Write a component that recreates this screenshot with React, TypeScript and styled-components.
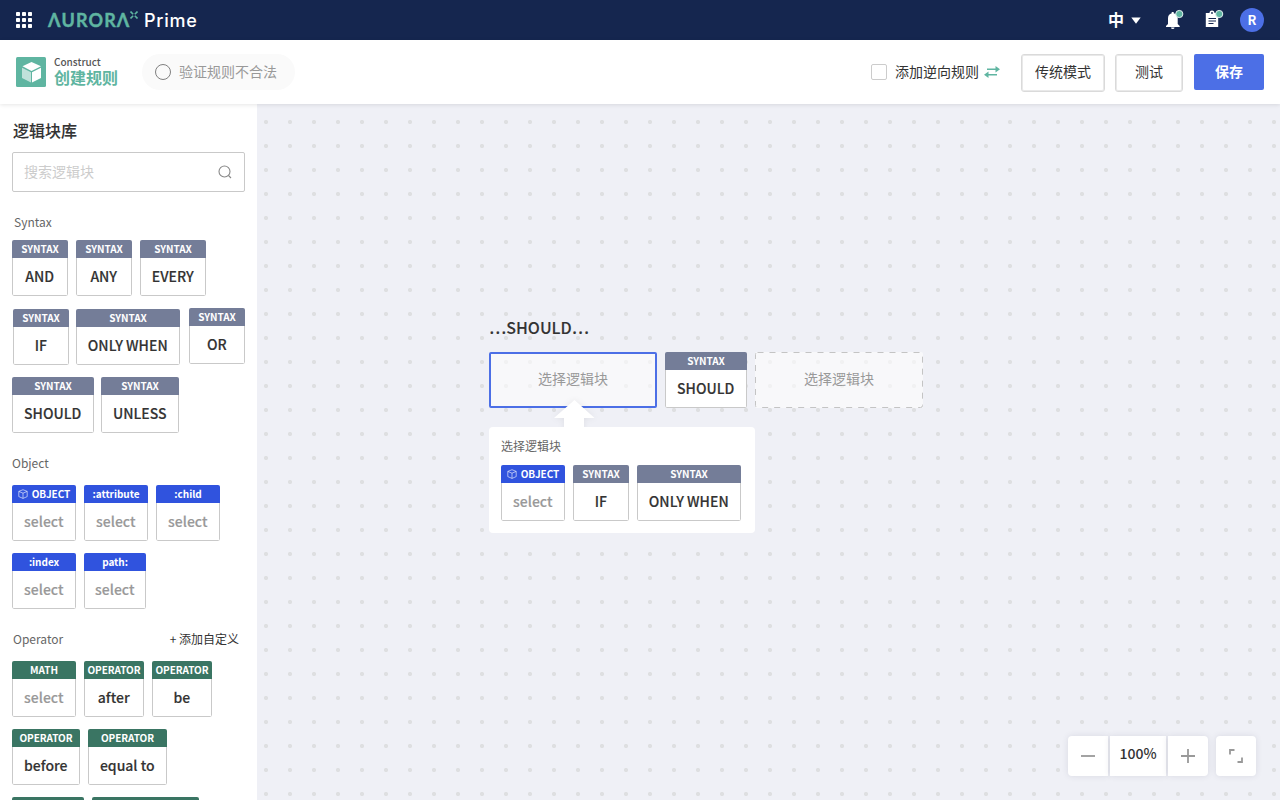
import React from "react";
import styled, { createGlobalStyle, css } from "styled-components";

const GlobalStyle = createGlobalStyle`
  *, *::before, *::after { box-sizing: border-box; }
  html, body { margin: 0; padding: 0; }
  body {
    width: 1280px;
    height: 800px;
    overflow: hidden;
    font-family: "Noto Sans CJK SC", "Noto Sans", sans-serif;
    color: #333;
  }
  button { font-family: inherit; cursor: pointer; padding: 0; }
`;

const Page = styled.div`
  display: flex;
  flex-direction: column;
  width: 1280px;
  height: 800px;
  overflow: hidden;
`;

const TopBar = styled.header`
  display: flex;
  align-items: center;
  flex: none;
  height: 40px;
  padding: 0 16px;
  background: #15264f;
`;

const Brand = styled.div`
  display: flex;
  align-items: center;
  margin-left: 16px;
`;

const Wordmark = styled.span`
  width: 83px;
  font-family: Lato, sans-serif;
  font-weight: 700;
  font-size: 18px;
  line-height: 24px;
  letter-spacing: 1.1px;
  white-space: nowrap;
  color: #5fb5a1;
  -webkit-text-stroke: 0.4px #5fb5a1;
`;

const LogoX = styled.svg`
  margin: -10px 6px 0 -1px;
`;

const Product = styled.span`
  padding-top: 1px;
  font-family: Inter, sans-serif;
  font-weight: 500;
  font-size: 18px;
  line-height: 24px;
  color: #fff;
  letter-spacing: 0.75px;
`;

const TopActions = styled.div`
  display: flex;
  align-items: center;
  margin-left: auto;
`;

const Language = styled.div`
  display: flex;
  align-items: center;
  gap: 7px;
  margin-right: 20px;
  color: #fff;
  font-size: 16px;
  line-height: 24px;
  font-weight: 700;
`;

const LanguageName = styled.span`
  margin-top: -2px;
`;

const ActionIcon = styled.svg<{ $gap: number }>`
  margin-right: ${(p) => p.$gap}px;
`;

const Avatar = styled.div`
  width: 24px;
  height: 24px;
  border-radius: 50%;
  background: #4c6fe6;
  color: #fff;
  font-size: 13px;
  font-weight: 700;
  line-height: 24px;
  text-align: center;
`;

const SubBar = styled.div`
  position: relative;
  z-index: 1;
  display: flex;
  align-items: center;
  flex: none;
  height: 64px;
  padding: 0 16px;
  background: #fff;
  box-shadow: 0 1px 4px rgba(0, 0, 0, 0.1);
`;

const TitleBlock = styled.div`
  display: flex;
  flex-direction: column;
  width: 88px;
  margin: -4px 0 0 8px;
`;

const Kicker = styled.span`
  font-size: 10px;
  line-height: 15px;
  font-weight: 500;
  color: #555;
`;

const Title = styled.span`
  font-size: 16px;
  line-height: 17px;
  font-weight: 700;
  color: #5fb5a1;
`;

const Status = styled.div`
  display: flex;
  align-items: center;
  gap: 8px;
  width: 153px;
  height: 36px;
  padding-left: 13px;
  border-radius: 18px;
  background: #fafafa;
  color: #999;
  font-size: 14px;
  line-height: 20px;
`;

const Raised = styled.span`
  padding-bottom: 2px;
`;

const StatusRing = styled.span`
  width: 16px;
  height: 16px;
  border: 1px solid #808080;
  border-radius: 50%;
`;

const SubActions = styled.div`
  display: flex;
  align-items: center;
  margin-left: auto;
`;

const CheckLabel = styled.div`
  display: flex;
  align-items: center;
  margin-right: 20px;
  font-size: 14px;
  line-height: 20px;
`;

const CheckBox = styled.span`
  width: 16px;
  height: 16px;
  margin-right: 8px;
  border: 1px solid #ccc;
  border-radius: 2px;
`;

const Swap = styled.svg`
  margin-left: 5px;
`;

const Button = styled.button<{ $w: number; $primary?: boolean }>`
  width: ${(p) => p.$w}px;
  height: 38px;
  margin: 1px 10px 0 0;
  border: 1px solid #dadada;
  border-radius: 3px;
  background: #fff;
  box-shadow: inset 0 0 0 1px #e9e9e9;
  color: #333;
  font-size: 14px;
  line-height: 20px;
  padding-bottom: 4px;
  ${(p) =>
    p.$primary &&
    css`
      height: 36px;
      margin: 0 0 0 1px;
      padding: 0 0 2px;
      border: 0;
      border-radius: 2px;
      background: #4c6fe6;
      box-shadow: none;
      color: #fff;
      font-weight: 700;
    `}
`;

const Body = styled.div`
  display: flex;
  flex: 1;
  min-height: 0;
`;

const Sidebar = styled.aside`
  flex: none;
  width: 257px;
  padding: 14px 12px 0;
  overflow: hidden;
  background: #fff;
`;

const SideTitle = styled.h2`
  margin: 0 0 10px 1px;
  font-size: 16px;
  line-height: 24px;
  font-weight: 500;
  -webkit-text-stroke: 0.1px #333;
`;

const Search = styled.div`
  display: flex;
  align-items: center;
  justify-content: space-between;
  height: 40px;
  padding: 0 12px 0 11px;
  border: 1px solid #c9c9c9;
  border-radius: 2px;
  color: #ccc;
  font-size: 14px;
  line-height: 20px;
`;

const GroupHead = styled.div<{ $indent?: number }>`
  display: flex;
  justify-content: space-between;
  margin-top: 21px;
  padding: 0 6px 1px ${(p) => p.$indent || 0}px;
  font-size: 12px;
  line-height: 18px;
  color: #666;
`;

const AddCustom = styled.span`
  color: #333;
`;

const TileRow = styled.div<{ $top?: number; $gap?: number }>`
  display: flex;
  align-items: flex-start;
  gap: ${(p) => p.$gap ?? 8}px;
  height: 56px;
  margin-top: ${(p) => p.$top ?? 12}px;
`;

const tones = { syntax: "#747d98", object: "#3053de", operator: "#3a7563" };
type Tone = keyof typeof tones;

const TileBox = styled.div<{ $w: number; $dx?: number; $dy?: number }>`
  flex: none;
  display: flex;
  flex-direction: column;
  width: ${(p) => p.$w}px;
  height: 56px;
  margin: ${(p) => p.$dy || 0}px 0 0 ${(p) => p.$dx || 0}px;
  border-radius: 2px;
  overflow: hidden;
`;

const TileTag = styled.div<{ $tone: Tone }>`
  display: flex;
  align-items: center;
  justify-content: center;
  gap: 4px;
  height: 18px;
  background: ${(p) => tones[p.$tone]};
  color: #fff;
  font-size: 10px;
  line-height: 18px;
  font-weight: 700;
  letter-spacing: -0.03px;
  white-space: nowrap;
`;

const TileLabel = styled.div<{ $muted?: boolean }>`
  flex: 1;
  border: 1px solid #c9c9c9;
  border-top: 0;
  border-radius: 0 0 2px 2px;
  background: #fff;
  color: ${(p) => (p.$muted ? "#999" : "#333")};
  font-size: 14px;
  line-height: 37px;
  font-weight: 500;
  -webkit-text-stroke: 0.15px currentColor;
  text-indent: -0.5px;
  text-align: center;
  white-space: nowrap;
`;

type TileProps = { tone: Tone; tag: string; label: string; w: number; dx?: number; dy?: number };

function CubeOutline() {
  return (
    <svg width="10" height="10" viewBox="0 0 10 10" fill="none" stroke="#fff" strokeWidth="0.6" strokeLinejoin="round">
      <path d="M5 .7 9.2 2.4V7.6L5 9.4.8 7.6V2.4ZM.8 2.4 5 4.2 9.2 2.4M5 4.2V9.4" />
    </svg>
  );
}

function Tile({ tone, tag, label, w, dx, dy }: TileProps) {
  return (
    <TileBox $w={w} $dx={dx} $dy={dy}>
      <TileTag $tone={tone}>
        {tag === "OBJECT" && <CubeOutline />}
        {tag}
      </TileTag>
      <TileLabel $muted={label === "select"}>{label}</TileLabel>
    </TileBox>
  );
}

const Canvas = styled.main`
  position: relative;
  flex: 1;
  background-color: #eff0f6;
  background-image: radial-gradient(circle at 12px 12px, #dedfe1 1.8px, transparent 2.4px);
  background-size: 24px 24px;
  background-position: -3px 6px;
`;

const RuleNode = styled.section`
  position: absolute;
  left: 232px;
  top: 211px;
`;

const RuleTitle = styled.h3`
  margin: 0 0 13px;
  font-size: 16px;
  line-height: 24px;
  font-weight: 500;
  -webkit-text-stroke: 0.1px #333;
`;

const RuleRow = styled.div`
  display: flex;
  gap: 8px;
`;

const Slot = styled.div<{ $active?: boolean }>`
  position: relative;
  display: flex;
  align-items: center;
  justify-content: center;
  width: 168px;
  height: 56px;
  padding-bottom: 4px;
  border-radius: 2px;
  background: rgba(254, 254, 253, 0.6);
  color: #999;
  font-size: 14px;
  line-height: 20px;
  ${(p) => p.$active && "border: 2px solid #4c6fe6;"}
`;

const Dashes = styled.svg`
  position: absolute;
  left: 0;
  top: 0;
`;

const Picker = styled.div`
  position: relative;
  width: 266px;
  height: 106px;
  margin-top: 19px;
  padding: 10px 12px;
  border-radius: 4px;
  background: #fff;
`;

const PickerArrow = styled.svg`
  position: absolute;
  left: 60px;
  top: -32px;
  filter: drop-shadow(0 0 3px rgba(0, 0, 0, 0.07));
  clip-path: inset(0 0 4px 0);
`;

const PickerTitle = styled.div`
  font-size: 12px;
  line-height: 18px;
  color: #666;
`;

const ZoomBar = styled.div`
  position: absolute;
  right: 24px;
  bottom: 24px;
  display: flex;
  height: 40px;
`;

const ZoomCell = styled.div<{ $w: number; $ml?: number; $r: string }>`
  display: flex;
  align-items: center;
  justify-content: center;
  width: ${(p) => p.$w}px;
  margin-left: ${(p) => p.$ml || 0}px;
  border-radius: ${(p) => p.$r};
  background: #fff;
  box-shadow: 0 0 6px rgba(60, 60, 80, 0.12);
  font-size: 14px;
  font-weight: 500;
  line-height: 20px;
`;

const ZoomValue = styled.span`
  padding-bottom: 6px;
`;

export default function App() {
  return (
    <Page>
      <GlobalStyle />
      <TopBar>
        <svg width="16" height="16" viewBox="0 0 16 16" fill="#fff">
          {[0, 6, 12].map((y) => [0, 6, 12].map((x) => <rect key={`${x}-${y}`} x={x} y={y} width="4" height="4" rx="0.8" />))}
        </svg>
        <Brand>
          <Wordmark aria-label="AURORA">ΛURORΛ</Wordmark>
          <LogoX width="8" height="8" viewBox="0 0 8 8" stroke="#5fb5a1" strokeWidth="1.6">
            <path d="M.5.5 3.2 3.2M7.500.5 4.800 3.200M.5 7.500 3.200 4.800M7.500 7.500 4.800 4.800" />
          </LogoX>
          <Product>Prime</Product>
        </Brand>
        <TopActions>
          <Language>
            <LanguageName>中</LanguageName>
            <svg width="10" height="7" viewBox="0 0 10 7" fill="#fff"><path d="M.3.5h9.400L5 6.700Z" /></svg>
          </Language>
          <ActionIcon $gap={15} width="24" height="24" viewBox="0 0 24 24">
            <path fill="#fff" d="M10.7 4h2v1.3c2.600.5 4 2.500 4 5V16l2 2v1H5v-1l2-2v-5.700c0-2.500 1.300-4.500 3.700-5ZM10 19.500h3.500a1.750 1.500 0 0 1-3.500 0Z" />
            <circle cx="18.300" cy="6" r="3.600" fill="#5fb5a1" stroke="#e6f3f1" strokeWidth="1" />
          </ActionIcon>
          <ActionIcon $gap={16} width="24" height="24" viewBox="0 0 24 24">
            <path fill="#fff" d="M5.800 5h3.700a2.500 2.500 0 0 1 5 0H18.200v14H5.800Z" />
            <circle cx="12" cy="5" r="0.900" fill="#15264f" />
            <path d="M8.500 10.500h7.500M8.500 13h7.500M8.500 15.500h5" stroke="#15264f" strokeWidth="1" />
            <circle cx="19.200" cy="6" r="3.600" fill="#5fb5a1" stroke="#e6f3f1" strokeWidth="1" />
          </ActionIcon>
          <Avatar>R</Avatar>
        </TopActions>
      </TopBar>
      <SubBar>
        <svg width="30" height="30" viewBox="0 0 30 30">
          <rect width="30" height="30" rx="1.500" fill="#5fb5a1" />
          <path d="M15.500 5 25 9.300 15.500 14 6.500 9.300Z" fill="#fff" />
          <path d="M6 10.700 15 15.200V25.500L6 21Z" fill="#c0e1da" />
          <path d="M25 10.700 16 15.200V25.500L25 21Z" fill="#fff" />
        </svg>
        <TitleBlock>
          <Kicker>Construct</Kicker>
          <Title>创建规则</Title>
        </TitleBlock>
        <Status>
          <StatusRing />
          <Raised>验证规则不合法</Raised>
        </Status>
        <SubActions>
          <CheckLabel>
            <CheckBox />
            <Raised>添加逆向规则</Raised>
            <Swap width="17" height="12" viewBox="0 0 17 12" fill="none" stroke="#5fb5a1" strokeWidth="1.600">
              <path d="M3 3.300H14M2 8.700H13" />
              <path d="M11.500 0 16 3.300 11.500 6.600ZM4.500 5.400 0 8.700 4.500 12Z" fill="#5fb5a1" stroke="none" />
            </Swap>
          </CheckLabel>
          <Button $w={84}>传统模式</Button>
          <Button $w={68}>测试</Button>
          <Button $w={70} $primary>保存</Button>
        </SubActions>
      </SubBar>
      <Body>
        <Sidebar>
          <SideTitle>逻辑块库</SideTitle>
          <Search>
            <Raised>搜索逻辑块</Raised>
            <svg width="14" height="14" viewBox="0 0 14 14" fill="none" stroke="#888" strokeWidth="1.100">
              <circle cx="6.500" cy="6.500" r="5.500" />
              <path d="m10.500 10.500 2.500 2.500" />
            </svg>
          </Search>
          <GroupHead $indent={2}>Syntax</GroupHead>
          <TileRow $top={8}>
            <Tile tone="syntax" tag="SYNTAX" label="AND" w={56} />
            <Tile tone="syntax" tag="SYNTAX" label="ANY" w={56} />
            <Tile tone="syntax" tag="SYNTAX" label="EVERY" w={66} />
          </TileRow>
          <TileRow $gap={7}>
            <Tile tone="syntax" tag="SYNTAX" label="IF" w={56} dx={1} dy={1} />
            <Tile tone="syntax" tag="SYNTAX" label="ONLY WHEN" w={104} dy={1} />
            <Tile tone="syntax" tag="SYNTAX" label="OR" w={56} dx={2} />
          </TileRow>
          <TileRow $top={13} $gap={7}>
            <Tile tone="syntax" tag="SYNTAX" label="SHOULD" w={82} />
            <Tile tone="syntax" tag="SYNTAX" label="UNLESS" w={78} />
          </TileRow>
          <GroupHead>Object</GroupHead>
          <TileRow>
            <Tile tone="object" tag="OBJECT" label="select" w={64} />
            <Tile tone="object" tag=":attribute" label="select" w={64} />
            <Tile tone="object" tag=":child" label="select" w={64} />
          </TileRow>
          <TileRow>
            <Tile tone="object" tag=":index" label="select" w={64} />
            <Tile tone="object" tag="path:" label="select" w={62} />
          </TileRow>
          <GroupHead $indent={1}>
            Operator
            <AddCustom>+ 添加自定义</AddCustom>
          </GroupHead>
          <TileRow>
            <Tile tone="operator" tag="MATH" label="select" w={64} />
            <Tile tone="operator" tag="OPERATOR" label="after" w={60} />
            <Tile tone="operator" tag="OPERATOR" label="be" w={60} />
          </TileRow>
          <TileRow>
            <Tile tone="operator" tag="OPERATOR" label="before" w={68} />
            <Tile tone="operator" tag="OPERATOR" label="equal to" w={79} />
          </TileRow>
          <TileRow>
            <Tile tone="operator" tag="" label="" w={72} />
            <Tile tone="operator" tag="" label="" w={107} />
          </TileRow>
        </Sidebar>
        <Canvas>
          <RuleNode>
            <RuleTitle>…SHOULD…</RuleTitle>
            <RuleRow>
              <Slot $active>选择逻辑块</Slot>
              <Tile tone="syntax" tag="SYNTAX" label="SHOULD" w={82} />
              <Slot>
                <Dashes width="168" height="56" fill="none" stroke="#c4c4c4">
                  <rect x="0.5" y="0.5" width="167" height="55" rx="2" strokeDasharray="6 6" />
                </Dashes>
                选择逻辑块
              </Slot>
            </RuleRow>
            <Picker>
              <PickerArrow width="50" height="36" viewBox="0 0 50 36" fill="#fff">
                <path d="M25.500 5 45.500 23H35V36H15V23H5Z" />
              </PickerArrow>
              <PickerTitle>选择逻辑块</PickerTitle>
              <TileRow $top={10}>
                <Tile tone="object" tag="OBJECT" label="select" w={64} />
                <Tile tone="syntax" tag="SYNTAX" label="IF" w={56} />
                <Tile tone="syntax" tag="SYNTAX" label="ONLY WHEN" w={104} />
              </TileRow>
            </Picker>
          </RuleNode>
          <ZoomBar>
            <ZoomCell $w={40} $r="4px 0 0 4px">
              <svg width="14" height="14" viewBox="0 0 14 14" stroke="#999" strokeWidth="1.800"><path d="M0 7h14" /></svg>
            </ZoomCell>
            <ZoomCell $w={56} $ml={2} $r="0">
              <ZoomValue>100%</ZoomValue>
            </ZoomCell>
            <ZoomCell $w={40} $ml={2} $r="0 4px 4px 0">
              <svg width="14" height="14" viewBox="0 0 14 14" stroke="#999" strokeWidth="1.800"><path d="M0 7h14M7 0v14" /></svg>
            </ZoomCell>
            <ZoomCell $w={40} $ml={8} $r="4px">
              <svg width="14" height="14" viewBox="0 0 14 14" fill="none" stroke="#999" strokeWidth="1.800"><path d="M1 5.500V1h4.500M13 8.500V13H8.500" /></svg>
            </ZoomCell>
          </ZoomBar>
        </Canvas>
      </Body>
    </Page>
  );
}
